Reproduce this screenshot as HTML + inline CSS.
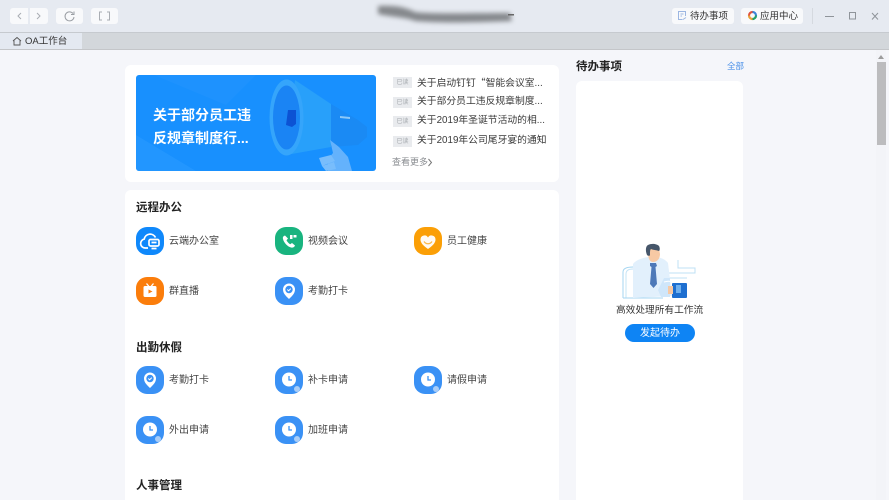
<!DOCTYPE html>
<html lang="zh"><head><meta charset="utf-8"><title>OA工作台</title>
<style>
*{box-sizing:border-box}
html,body{margin:0;padding:0;width:889px;height:500px;overflow:hidden;background:#f5f6fa}
body{font-family:"Liberation Sans","Noto Sans CJK SC",sans-serif;color:#333;position:relative}
.a{position:absolute;white-space:nowrap}
#root{position:absolute;left:0;top:0;width:889px;height:500px;overflow:hidden;filter:blur(.35px)}
.btn{position:absolute;background:#f8f9fb;border-radius:3px;top:8px;height:16px}
.card{position:absolute;background:#fff;border-radius:6px}
.ic{position:absolute;width:28px;height:28px;border-radius:11px}
.ic svg{position:absolute;left:0;top:0}
.lb{position:absolute;font-size:10px;line-height:14px;color:#444;white-space:nowrap}
.h{position:absolute;font-size:11.5px;font-weight:700;line-height:16px;color:#222;white-space:nowrap}
.tag{position:absolute;left:393px;width:19px;height:11px;background:#e9ebee;color:#a5a9ae;font-size:6px;line-height:12px;text-align:center}
.nt{position:absolute;left:417px;font-size:9.8px;line-height:14px;color:#3a3a3a;white-space:nowrap}
</style></head><body><div id="root">

<!-- toolbar -->
<div class="a" style="left:0;top:0;width:889px;height:32px;background:#e6eaf1"></div>
<div class="a" style="left:0;top:32px;width:889px;height:17px;background:#d3d7db;border-top:1px solid #c6cacf"></div>
<div class="a" style="left:0;top:49px;width:889px;height:1px;background:#c4c6c9"></div>
<div class="a" style="left:0;top:33px;width:82px;height:16px;background:#e4e9f1"></div>

<div class="btn" style="left:10px;width:18px;border-radius:3px 0 0 3px"></div>
<div class="btn" style="left:30px;width:18px;border-radius:0 3px 3px 0"></div>
<div class="btn" style="left:56px;width:27px"></div>
<div class="btn" style="left:91px;width:27px"></div>
<svg class="a" style="left:0;top:0" width="130" height="32" fill="none" stroke="#a9adb3" stroke-width="1">
<path d="M21 13l-3 3 3 3M37 13l3 3-3 3"/>
<path d="M73 13.500A4.500 4.500 0 1 0 74 17M74 11.500v3h-3" stroke="#9a9ea4"/>
<path d="M102 12h-2.500v8h2.500M107 12h2.500v8h-2.500"/>
</svg>
<svg class="a" style="left:12px;top:36px" width="10" height="10" fill="none" stroke="#555" stroke-width=".9"><path d="M1 5l4-3.500L9 5M2 4.500V9h6V4.500"/></svg>
<div class="a" style="left:25px;top:35px;font-size:9.500px;line-height:14px;color:#333">OA工作台</div>

<!-- smudged title -->
<svg class="a" style="left:360px;top:0" width="170" height="30"><path d="M18 6C35 5 45 7 55 12C70 14 110 13 150 13L152 21C110 23 75 23 55 21C45 17 30 17 18 14Z" fill="#85888c" style="filter:blur(2.500px)"/><rect x="148" y="14" width="6" height="1.500" fill="#666"/></svg>

<!-- top right -->
<div class="a" style="left:672px;top:8px;width:62px;height:16px;background:#f8f9fb;border-radius:3px"></div>
<div class="a" style="left:741px;top:8px;width:62px;height:16px;background:#f8f9fb;border-radius:3px"></div>
<svg class="a" style="left:677px;top:10px" width="11" height="11" fill="none" stroke="#9cb6e2" stroke-width="1"><path d="M8.500 6V1.500h-7v8h4M3.500 4h3M3.500 6h1.500M6 9.500l3-2"/></svg>
<div class="a" style="left:690px;top:10px;font-size:9.500px;line-height:14px;color:#333">待办事项</div>
<svg class="a" style="left:747px;top:10px" width="11" height="11" fill="none" stroke-width="2.200"><path d="M2 5.500A3.500 3.500 0 0 1 5.500 2" stroke="#e0523f"/><path d="M5.500 2A3.500 3.500 0 0 1 9 5.500" stroke="#3b82d9"/><path d="M9 5.500A3.500 3.500 0 0 1 5.500 9" stroke="#22a06b"/><path d="M5.500 9A3.500 3.500 0 0 1 2 5.500" stroke="#e8a33a"/></svg>
<div class="a" style="left:760px;top:10px;font-size:9.500px;line-height:14px;color:#333">应用中心</div>
<div class="a" style="left:812px;top:8px;width:1px;height:16px;background:#d5d9df"></div>
<svg class="a" style="left:820px;top:8px" width="66" height="16" fill="none" stroke="#8f949a" stroke-width="1"><path d="M5 8.500h9"/><rect x="29.500" y="4.500" width="6" height="6.500"/><path d="M52 5l6 6.500M58 5l-6 6.500"/></svg>

<!-- banner card -->
<div class="card" style="left:125px;top:65px;width:434px;height:117px"></div>
<div class="a" style="left:136px;top:75px;width:240px;height:96px;border-radius:3px;overflow:hidden;background:#1890fe">
<svg width="240" height="96" style="position:absolute;left:0;top:0">
<path d="M0 60L60 96H0Z" fill="#2a9bff" opacity=".6"/>
<path d="M18 0L90 30 120 0Z" fill="#2a98ff" opacity=".35"/>
<path d="M195 29L222 45 231 52 231 62 222 70 195 72Z" fill="#1a8af4"/>
<path d="M159 5L195 29 195 72 150 80Z" fill="#28a0fa"/>
<ellipse cx="150.500" cy="42.500" rx="17" ry="38" fill="#35a5fb"/>
<ellipse cx="150.500" cy="42.500" rx="13.500" ry="32" fill="#1a84f4"/>
<path d="M152 35h8v14l-4 3-6-2Z" fill="#0c52d4"/>
<path d="M204 41l10 1 0 2-10-1Z" fill="#8cc8f8"/>
<path d="M194 65L203 72 212 82 216 96H192L192 84 197 78Z" fill="#64b2fc"/>
<path d="M183 83L195 80 199 86 186 91ZM186 91L198 87 200 94 190 96Z" fill="#78bdfc"/>
</svg>
<div class="a" style="left:17px;top:29px;font-size:14px;line-height:23px;font-weight:700;color:#fff">关于部分员工违<br>反规章制度行...</div>
</div>

<div class="tag" style="top:77px">已读</div><div class="nt" style="top:75px">关于启动钉钉<span style="font-family:'Noto Sans CJK SC',sans-serif">“</span>智能会议室...</div>
<div class="tag" style="top:97px">已读</div><div class="nt" style="top:95px">关于部分员工违反规章制度...</div>
<div class="tag" style="top:116px">已读</div><div class="nt" style="top:114px">关于2019年圣诞节活动的相...</div>
<div class="tag" style="top:136px">已读</div><div class="nt" style="top:134px">关于2019年公司尾牙宴的通知</div>
<div class="a" style="left:392px;top:155px;font-size:9px;line-height:14px;color:#8a8d91">查看更多</div>
<svg class="a" style="left:427px;top:158px" width="6" height="9" fill="none" stroke="#777" stroke-width="1"><path d="M1.500 1l3 3.500-3 3.500"/></svg>

<!-- main card -->
<div class="card" style="left:125px;top:190px;width:434px;height:320px"></div>
<div class="h" style="left:136px;top:200px">远程办公</div>
<div class="h" style="left:136px;top:340px">出勤休假</div>
<div class="h" style="left:136px;top:478px">人事管理</div>

<!-- row 1 -->
<div class="ic" style="left:136px;top:227px;background:#0f88fb"><svg width="28" height="28" fill="none" stroke="#fff" stroke-width="1.700"><path d="M12 21H9a4.500 4.500 0 0 1-.8-8.900A6 6 0 0 1 19.500 10.500"/><rect x="13" y="12.500" width="10" height="6.500" rx="1.500" fill="#0f88fb"/><path d="M15.500 15.500h5M15.500 21.500h5"/></svg></div>
<div class="lb" style="left:169px;top:235px">云端办公室</div>
<div class="ic" style="left:275px;top:227px;background:#19b47f"><svg width="28" height="28" fill="#fff"><path d="M10 8.500c-1.500.5-2.500 1.500-2 3.500 1 4 4.500 7.500 8 8.500 2 .5 3.500-.5 4-2l-3-2.500-1.800 1.200c-1.500-.8-3-2.400-3.700-4L13 11.500Z"/><rect x="15" y="8" width="2.500" height="4"/><rect x="18.500" y="8" width="3" height="2.500"/></svg></div>
<div class="lb" style="left:308px;top:235px">视频会议</div>
<div class="ic" style="left:414px;top:227px;background:#fb9f06"><svg width="28" height="28"><path d="M14 22C8 18 6.500 15 6.500 12.500A4 4 0 0 1 14 10.500 4 4 0 0 1 21.500 12.500C21.500 15 20 18 14 22Z" fill="#fff" opacity=".95"/><path d="M10 14.500c2 3 6 3 8 0" stroke="#fbb84a" stroke-width="1.200" fill="none"/></svg></div>
<div class="lb" style="left:447px;top:235px">员工健康</div>

<!-- row 2 -->
<div class="ic" style="left:136px;top:277px;background:#fb7d0b"><svg width="28" height="28"><rect x="7.500" y="9" width="13" height="11" rx="1.500" fill="#fff"/><path d="M10.500 6.500l2.500 3M17.500 6.500l-2.500 3" stroke="#fff" stroke-width="1.300"/><path d="M12.500 12.500l4 2-4 2Z" fill="#fb7d0b"/></svg></div>
<div class="lb" style="left:169px;top:285px">群直播</div>
<div class="ic" style="left:275px;top:277px;background:#3a91f5"><svg width="28" height="28"><path d="M14 22c-3-3-6-5.500-6-9.500a6 6 0 0 1 12 0c0 4-3 6.500-6 9.500Z" fill="#fff"/><circle cx="14" cy="12.500" r="3.700" fill="#3a91f5"/><path d="M12.300 12.500l1.300 1.300 2.200-2.200" stroke="#fff" stroke-width="1" fill="none"/></svg></div>
<div class="lb" style="left:308px;top:285px">考勤打卡</div>

<!-- row 3 -->
<div class="ic" style="left:136px;top:366px;background:#3a91f5"><svg width="28" height="28"><path d="M14 22c-3-3-6-5.500-6-9.500a6 6 0 0 1 12 0c0 4-3 6.500-6 9.500Z" fill="#fff"/><circle cx="14" cy="12.500" r="3.700" fill="#3a91f5"/><path d="M12.300 12.500l1.300 1.300 2.200-2.200" stroke="#fff" stroke-width="1" fill="none"/></svg></div>
<div class="lb" style="left:169px;top:374px">考勤打卡</div>
<div class="ic" style="left:275px;top:366px;background:#3a91f5"><svg width="28" height="28"><circle cx="14" cy="13.500" r="7" fill="#fff"/><path d="M14 10v4h3" stroke="#3a91f5" stroke-width="1.300" fill="none"/><circle cx="22" cy="23" r="3" fill="#a8cdf8"/></svg></div>
<div class="lb" style="left:308px;top:374px">补卡申请</div>
<div class="ic" style="left:414px;top:366px;background:#3a91f5"><svg width="28" height="28"><circle cx="14" cy="13.500" r="7" fill="#fff"/><path d="M14 10v4h3" stroke="#3a91f5" stroke-width="1.300" fill="none"/><circle cx="22" cy="23" r="3" fill="#a8cdf8"/></svg></div>
<div class="lb" style="left:447px;top:374px">请假申请</div>

<!-- row 4 -->
<div class="ic" style="left:136px;top:416px;background:#3a91f5"><svg width="28" height="28"><circle cx="14" cy="13.500" r="7" fill="#fff"/><path d="M14 10v4h3" stroke="#3a91f5" stroke-width="1.300" fill="none"/><circle cx="22" cy="23" r="3" fill="#a8cdf8"/></svg></div>
<div class="lb" style="left:169px;top:424px">外出申请</div>
<div class="ic" style="left:275px;top:416px;background:#3a91f5"><svg width="28" height="28"><circle cx="14" cy="13.500" r="7" fill="#fff"/><path d="M14 10v4h3" stroke="#3a91f5" stroke-width="1.300" fill="none"/><circle cx="22" cy="23" r="3" fill="#a8cdf8"/></svg></div>
<div class="lb" style="left:308px;top:424px">加班申请</div>

<!-- right column -->
<div class="a" style="left:576px;top:59px;font-size:11.500px;line-height:17px;font-weight:700;color:#222">待办事项</div>
<div class="a" style="left:727px;top:60px;font-size:8.500px;line-height:13px;color:#4a90e8">全部</div>
<div class="card" style="left:576px;top:81px;width:167px;height:430px"></div>

<svg class="a" style="left:620px;top:240px" width="80" height="64" fill="none">
<path d="M3 58V32C3 28 8 27 13 27" stroke="#a5d6f2" stroke-width="1"/>
<path d="M6 58V34c0-3 2-5 7-5" stroke="#c5e4f6" stroke-width="1"/>
<path d="M3 58h40" stroke="#a5d6f2" stroke-width="1"/>
<path d="M58 20V28H75V33H48V38H67" stroke="#bfe0f4" stroke-width="1"/>
<path d="M13 58V24c3-4 9-6 15-7l4 2 5-2c5 1 9 3 11 6l4 33Z" fill="#e2f0fc"/>
<path d="M30 23h6l1 3-1.500 1 1.500 17-3.500 4-3.500-4 1.500-17-1.500-1Z" fill="#4e79b8"/>
<path d="M28 12c0 5 1 10 5 10s7-3 7-8l-1-6H29Z" fill="#f7c9a4"/>
<path d="M27 15c-2-5-1-9 1-10 4-2 9-1 11 1 1 2 1 4 0 5-3-1-6-1-8-2-1 1-1 2-1 6 0 1-2 1-3 0Z" fill="#46566a"/>
<path d="M50 38h-6l-6 12 3 7h9Z" fill="#cfe6fa"/>
<rect x="52" y="43" width="15" height="15" rx="1" fill="#1e6fd0"/>
<rect x="56" y="45" width="5" height="8" fill="#6fb0ee"/>
<path d="M48 46h5v8h-5Z" fill="#f7c9a4"/>
<path d="M44 42c3-1 6-1 8 0" stroke="#fff" stroke-width="1"/>
</svg>
<div class="a" style="left:616px;top:304px;font-size:9.700px;line-height:14px;color:#333">高效处理所有工作流</div>
<div class="a" style="left:625px;top:324px;width:70px;height:18px;border-radius:9px;background:#0e84f4;color:#fff;font-size:10px;line-height:19px;text-align:center">发起待办</div>

<!-- scrollbar -->
<div class="a" style="left:876px;top:50px;width:10px;height:450px;background:#f3f4f8"></div>
<svg class="a" style="left:877px;top:54px" width="8" height="6"><path d="M4 1L7 5H1Z" fill="#9c9c9c"/></svg>
<div class="a" style="left:877px;top:62px;width:9px;height:83px;background:#bcbcbe"></div>

</div></body></html>
